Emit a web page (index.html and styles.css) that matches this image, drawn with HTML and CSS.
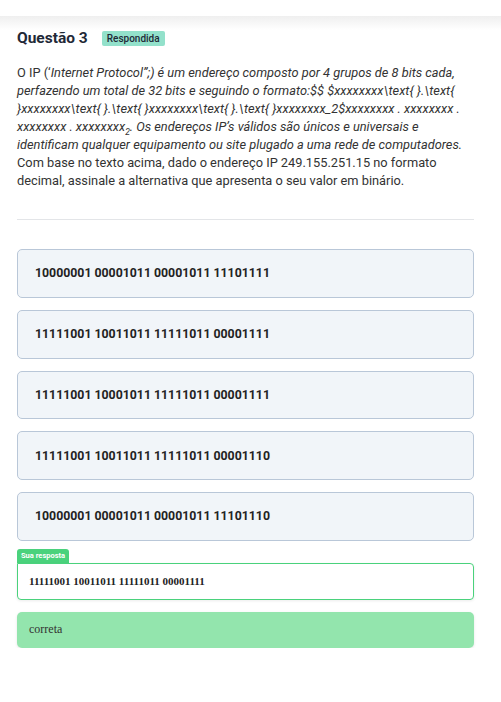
FILE: index.html
```html
<!DOCTYPE html>
<html lang="pt">
<head>
<meta charset="utf-8">
<link rel="stylesheet" href="styles.css">
</head>
<body>
<div class="topbar"></div>
<div class="shade"></div>
<main class="page">
  <div class="head">
    <h1 class="title">Questão 3</h1>
    <span class="badge">Respondida</span>
  </div>
  <p class="statement">O IP (‘<i>Internet Protocol”;) é um endereço composto por 4 grupos de 8 bits cada, perfazendo um total de 32 bits e seguindo o formato:$$ $xxxxxxxx\text{ }.\text{ }xxxxxxxx\text{ }.\text{ }xxxxxxxx\text{ }.\text{ }xxxxxxxx_2$xxxxxxxx . xxxxxxxx . xxxxxxxx . xxxxxxxx<sub>2</sub>. Os endereços IP’s válidos são únicos e universais e identificam qualquer equipamento ou site plugado a uma rede de computadores.</i> Com base no texto acima, dado o endereço IP 249.155.251.15 no formato decimal, assinale a alternativa que apresenta o seu valor em binário.</p>
  <hr class="divider">
  <ul class="options">
    <li class="option">10000001 00001011 00001011 11101111</li>
    <li class="option">11111001 10011011 11111011 00001111</li>
    <li class="option">11111001 10001011 11111011 00001111</li>
    <li class="option">11111001 10011011 11111011 00001110</li>
    <li class="option">10000001 00001011 00001011 11101110</li>
  </ul>
  <div class="answer">
    <span class="answer-tag">Sua resposta</span>
    <div class="answer-box">11111001 10011011 11111011 00001111</div>
  </div>
  <div class="result">correta</div>
</main>
</body>
</html>
```

FILE: styles.css
```css
html, body {
  margin: 0;
  padding: 0;
  background: #ffffff;
}
body {
  font-family: Roboto, "Liberation Sans", sans-serif;
  color: #222;
}
.topbar {
  height: 16px;
  background: #fff;
}
.shade {
  height: 14px;
  background: linear-gradient(#efefef, #ffffff);
}
.page {
  padding: 0 27px 0 17px;
}
.head {
  display: flex;
  align-items: center;
  gap: 14px;
  height: 16px;
}
.title {
  margin: 0;
  font-size: 15.5px;
  font-weight: 700;
  color: #1f2937;
  line-height: 16px;
}
.badge {
  background: #93e1cb;
  color: #1f2937;
  font-size: 10px;
  font-weight: 500;
  line-height: 15px;
  padding: 0 5px;
  border-radius: 2px;
}
.statement {
  margin: 18px 0 0;
  font-size: 12.8px;
  line-height: 18px;
  color: #333;
}
.statement sub {
  font-size: 8.5px;
  line-height: 0;
}
.divider {
  border: 0;
  border-top: 1px solid #e3e5e8;
  margin: 29px 0 29px;
}
.options {
  list-style: none;
  margin: 0;
  padding: 0;
  display: flex;
  flex-direction: column;
  gap: 12px;
}
.option {
  height: 46.75px;
  display: flex;
  align-items: center;
  padding-left: 17px;
  background: #f1f5f9;
  border: 1px solid #b9c7d8;
  border-radius: 5px;
  font-size: 12.3px;
  font-weight: 700;
  color: #222;
}
.answer {
  margin-top: 8px;
  display: flex;
  flex-direction: column;
  align-items: flex-start;
}
.answer-tag {
  background: #4ad27c;
  color: #fff;
  font-size: 7.5px;
  font-weight: 700;
  line-height: 14px;
  padding: 0 4px;
  border-radius: 3px 3px 0 0;
}
.answer-box {
  align-self: stretch;
  height: 35px;
  display: flex;
  align-items: center;
  padding-left: 11px;
  border: 1px solid #4ad27c;
  border-radius: 0 4px 4px 4px;
  font-family: "Liberation Serif", serif;
  font-weight: 700;
  font-size: 11px;
  color: #222;
  box-shadow: 0 1px 3px rgba(0,0,0,0.08);
}
.result {
  margin-top: 12px;
  height: 36px;
  display: flex;
  align-items: center;
  padding-left: 12px;
  background: #93e5ad;
  border-radius: 5px;
  font-family: "Liberation Serif", serif;
  font-size: 12px;
  color: #333;
  box-shadow: 0 1px 3px rgba(0,0,0,0.1);
}
```
